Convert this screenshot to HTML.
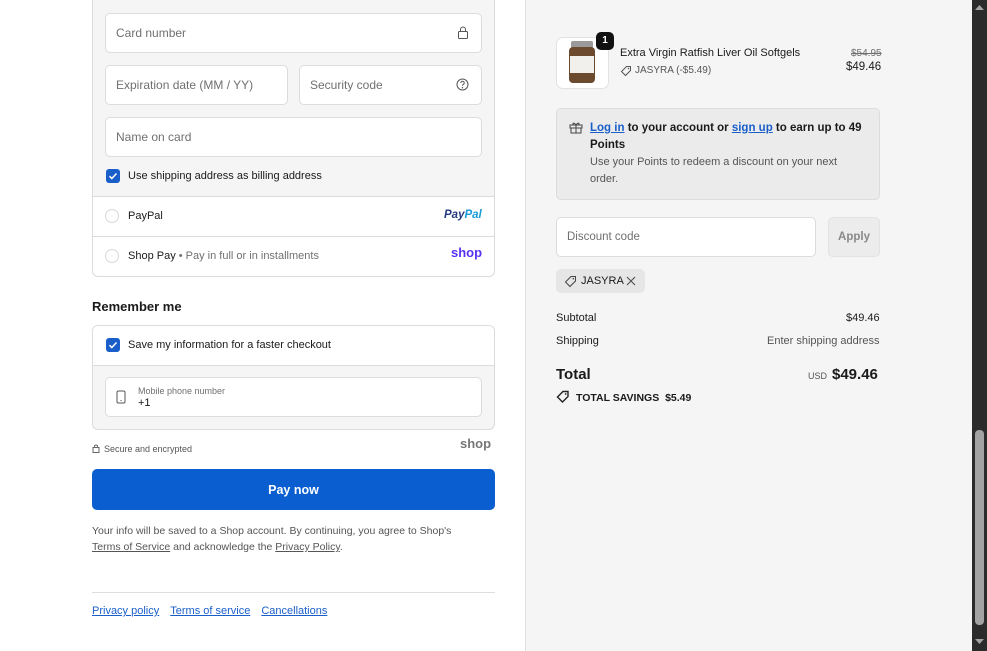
<!DOCTYPE html>
<html><head><meta charset="utf-8">
<style>
*{box-sizing:border-box;margin:0;padding:0}
body{width:987px;height:651px;overflow:hidden;font-family:"Liberation Sans",sans-serif;color:#1a1a1a;position:relative;background:#fff;font-size:12px}
.a{position:absolute}
.left{left:0;top:0;width:525px;height:651px;background:#fff}
.right{left:525px;top:0;width:447px;height:651px;background:#f5f5f5;border-left:1px solid #dedede}
.inp{position:absolute;background:#fff;border:1px solid #dcdcdc;border-radius:5px;color:#707070;font-size:12px;padding-left:10px;display:flex;align-items:center}
.cb{position:absolute;width:14px;height:14px;background:#1a5fc9;border-radius:3px}
.rad{position:absolute;width:14px;height:14px;border:1px solid #d8d8d8;border-radius:50%;background:#fff}
.lnk{color:#1a5fc9;text-decoration:underline}
.u{text-decoration:underline}
</style></head><body>
<div class="a left"></div>
<div class="a right"></div>

<div class="a" style="left:92px;top:-2px;width:403px;height:199px;background:#f5f5f5;border:1px solid #dcdcdc;border-top:2px solid #1a5fc9;border-bottom:none"></div>
<div class="inp" style="left:105px;top:13px;width:377px;height:40px">Card number</div>
<svg class="a" style="left:457px;top:26px" width="12" height="13" viewBox="0 0 12 13"><rect x="1.5" y="5.5" width="9" height="7" rx="1" fill="none" stroke="#555"/><path d="M3.5 5.5V3.5a2.5 2.5 0 015 0v2" fill="none" stroke="#555"/></svg>
<div class="inp" style="left:105px;top:65px;width:183px;height:40px">Expiration date (MM / YY)</div>
<div class="inp" style="left:299px;top:65px;width:183px;height:40px">Security code</div>
<svg class="a" style="left:456px;top:78px" width="13" height="13" viewBox="0 0 13 13"><circle cx="6.5" cy="6.5" r="5.5" fill="none" stroke="#555"/><path d="M4.8 5a1.7 1.7 0 113 1c-.8.5-1.3.8-1.3 1.7" fill="none" stroke="#555"/><circle cx="6.5" cy="9.7" r=".7" fill="#555"/></svg>
<div class="inp" style="left:105px;top:117px;width:377px;height:40px">Name on card</div>
<div class="cb" style="left:106px;top:169px"></div>
<svg class="a" style="left:106px;top:169px" width="14" height="14"><path d="M3.5 7.2l2.3 2.3L10.5 4.5" fill="none" stroke="#fff" stroke-width="1.5"/></svg>
<div class="a" style="left:128px;top:170px;font-size:11px">Use shipping address as billing address</div>

<div class="a" style="left:92px;top:196px;width:403px;height:81px;border:1px solid #dcdcdc;border-radius:0 0 6px 6px;background:#fff"></div>
<div class="a" style="left:92px;top:236px;width:403px;height:1px;background:#dcdcdc"></div>
<div class="rad" style="left:105px;top:209px"></div>
<div class="a" style="left:128px;top:210px;font-size:11px">PayPal</div>
<div class="a" style="left:444px;top:209px;font-size:11.5px;font-weight:bold;font-style:italic;color:#253b80">Pay<span style="color:#179bd7">Pal</span></div>
<div class="rad" style="left:105px;top:249px"></div>
<div class="a" style="left:128px;top:250px;font-size:11px">Shop Pay <span style="color:#707070">• Pay in full or in installments</span></div>
<div class="a" style="left:451px;top:245px;font-size:13px;font-weight:bold;color:#5a31f4">shop</div>

<div class="a" style="left:92px;top:299px;font-size:13px;font-weight:bold">Remember me</div>
<div class="a" style="left:92px;top:325px;width:403px;height:105px;border:1px solid #dcdcdc;border-radius:6px;background:#f5f5f5;overflow:hidden"><div style="height:40px;background:#fff;border-bottom:1px solid #dcdcdc"></div></div>
<div class="cb" style="left:106px;top:338px"></div>
<svg class="a" style="left:106px;top:338px" width="14" height="14"><path d="M3.5 7.2l2.3 2.3L10.5 4.5" fill="none" stroke="#fff" stroke-width="1.5"/></svg>
<div class="a" style="left:128px;top:339px;font-size:11px">Save my information for a faster checkout</div>
<div class="inp" style="left:105px;top:377px;width:377px;height:40px"></div>
<svg class="a" style="left:116px;top:390px" width="10" height="14"><rect x="1" y="1" width="8" height="12" rx="1.5" fill="none" stroke="#555"/><circle cx="5" cy="10.5" r=".6" fill="#555"/></svg>
<div class="a" style="left:138px;top:386px;font-size:9px;color:#707070">Mobile phone number</div>
<div class="a" style="left:138px;top:397px;font-size:11px">+1</div>

<svg class="a" style="left:92px;top:444px" width="8" height="9"><rect x="1" y="3.5" width="6" height="5" fill="none" stroke="#666"/><path d="M2.5 3.5V2.5a1.5 1.5 0 013 0v1" fill="none" stroke="#666"/></svg>
<div class="a" style="left:104px;top:444px;font-size:9px;color:#555">Secure and encrypted</div>
<div class="a" style="left:460px;top:436px;font-size:13px;font-weight:bold;color:#777">shop</div>

<div class="a" style="left:92px;top:469px;width:403px;height:41px;background:#0a5ecf;border-radius:5px;color:#fff;font-weight:bold;font-size:12.5px;display:flex;align-items:center;justify-content:center">Pay now</div>
<div class="a" style="left:92px;top:523px;width:388px;font-size:10.5px;color:#555;line-height:16px">Your info will be saved to a Shop account. By continuing, you agree to Shop's <span class="u">Terms of Service</span> and acknowledge the <span class="u">Privacy Policy</span>.</div>
<div class="a" style="left:92px;top:592px;width:403px;height:1px;background:#dedede"></div>
<div class="a" style="left:92px;top:605px;font-size:11px;color:#1a5fc9"><span class="u">Privacy policy</span><span class="u" style="margin-left:11px">Terms of service</span><span class="u" style="margin-left:11px">Cancellations</span></div>

<div class="a" style="left:556px;top:37px;width:53px;height:52px;background:#fff;border:1px solid #e2e2e2;border-radius:7px"></div>
<div class="a" style="left:571px;top:41px;width:22px;height:7px;background:#9a9a9a;border-radius:2px"></div>
<div class="a" style="left:569px;top:47px;width:26px;height:36px;background:#6b4a2e;border-radius:4px"></div>
<div class="a" style="left:570px;top:56px;width:24px;height:17px;background:#f2f0ec"></div>
<div class="a" style="left:596px;top:32px;width:18px;height:18px;background:#111;color:#fff;border-radius:5px;font-size:10px;font-weight:bold;text-align:center;line-height:18px">1</div>
<div class="a" style="left:620px;top:47px;font-size:11px">Extra Virgin Ratfish Liver Oil Softgels</div>
<svg class="a" style="left:620px;top:65px" width="12" height="12"><path d="M6.5 1.5h4v4l-5 5-4-4z" fill="none" stroke="#555"/><circle cx="8.5" cy="3.5" r=".8" fill="#555"/></svg>
<div class="a" style="left:635px;top:65px;font-size:10px;color:#555">JASYRA (-$5.49)</div>
<div class="a" style="left:851px;top:48px;font-size:10px;color:#707070;text-decoration:line-through">$54.95</div>
<div class="a" style="left:846px;top:61px;font-size:11.5px">$49.46</div>

<div class="a" style="left:556px;top:108px;width:324px;height:92px;background:#ebebeb;border:1px solid #dcdcdc;border-radius:5px"></div>
<svg class="a" style="left:569px;top:121px" width="14" height="13"><rect x="1" y="4" width="12" height="3" fill="none" stroke="#444"/><rect x="2" y="7" width="10" height="5" fill="none" stroke="#444"/><path d="M7 4v8M7 4C5 1 3 2 4.5 4M7 4c2-3 4-2 2.5 0" fill="none" stroke="#444"/></svg>
<div class="a" style="left:590px;top:120px;width:285px;font-size:11.5px;line-height:17px;font-weight:bold"><span class="lnk">Log in</span> to your account or <span class="lnk">sign up</span> to earn up to 49 Points</div>
<div class="a" style="left:590px;top:154px;width:262px;font-size:11px;line-height:17px;color:#555">Use your Points to redeem a discount on your next order.</div>

<div class="inp" style="left:556px;top:217px;width:260px;height:40px;font-size:11.5px">Discount code</div>
<div class="a" style="left:828px;top:217px;width:52px;height:40px;background:#ececec;border:1px solid #e2e2e2;border-radius:5px;color:#888;font-size:11.5px;font-weight:bold;display:flex;align-items:center;justify-content:center">Apply</div>
<div class="a" style="left:556px;top:269px;width:89px;height:24px;background:#e6e6e6;border-radius:5px"></div>
<svg class="a" style="left:564px;top:275px" width="13" height="13"><path d="M7 1.5h4.5V6l-5.5 5.5-4.5-4.5z" fill="none" stroke="#444"/><circle cx="9.3" cy="3.7" r=".8" fill="#444"/></svg>
<div class="a" style="left:581px;top:275px;font-size:11px">JASYRA</div>
<svg class="a" style="left:626px;top:276px" width="10" height="10"><path d="M1 1l8 8M9 1L1 9" stroke="#555" stroke-width="1.2"/></svg>

<div class="a" style="left:556px;top:312px;font-size:11px">Subtotal</div>
<div class="a" style="left:846px;top:312px;font-size:11px">$49.46</div>
<div class="a" style="left:556px;top:335px;font-size:11px">Shipping</div>
<div class="a" style="left:767px;top:335px;font-size:11px;color:#555">Enter shipping address</div>
<div class="a" style="left:556px;top:366px;font-size:15px;font-weight:bold">Total</div>
<div class="a" style="left:808px;top:371px;font-size:9px;color:#555">USD</div>
<div class="a" style="left:832px;top:366px;font-size:15px;font-weight:bold">$49.46</div>
<svg class="a" style="left:556px;top:390px" width="14" height="14"><path d="M7 1.5h5V6.5l-5.5 5.5-5-5z" fill="none" stroke="#222" stroke-width="1.4"/><circle cx="9.7" cy="4" r=".9" fill="#222"/></svg>
<div class="a" style="left:576px;top:392px;font-size:10.5px;font-weight:bold">TOTAL SAVINGS&nbsp; $5.49</div>

<div class="a" style="left:972px;top:0;width:15px;height:651px;background:#2b2b2b"></div>
<div class="a" style="left:975px;top:430px;width:9px;height:195px;background:#a3a3a3;border-radius:4px"></div>
<svg class="a" style="left:974px;top:3px" width="11" height="8"><path d="M1 7l4.5-5L10 7z" fill="#a3a3a3"/></svg>
<svg class="a" style="left:974px;top:638px" width="11" height="8"><path d="M1 1l4.5 5L10 1z" fill="#a3a3a3"/></svg>
</body></html>
